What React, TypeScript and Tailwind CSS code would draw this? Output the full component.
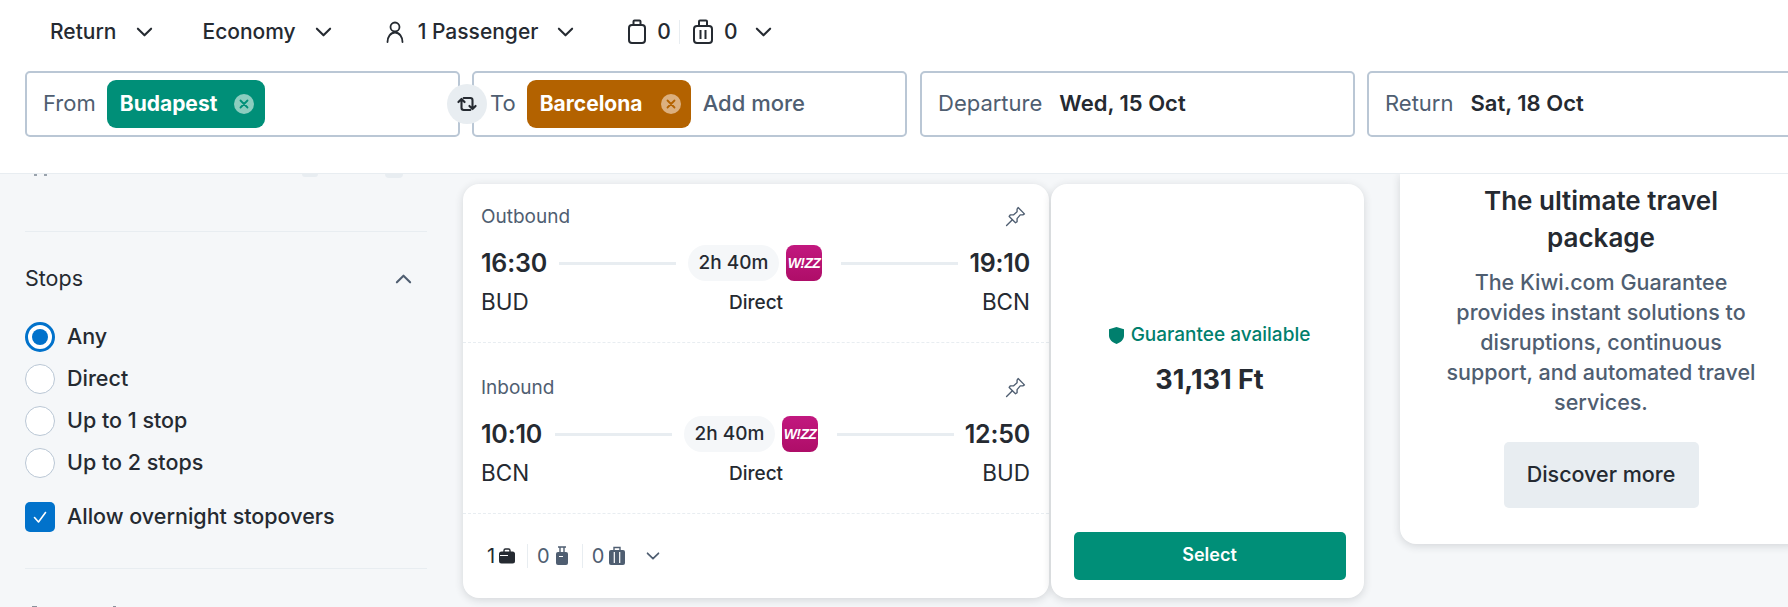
const font = { fontFamily: "Inter, 'Noto Sans', sans-serif" }

const Chevron = ({ className = "", up = false }: { className?: string; up?: boolean }) => (
  <svg viewBox="0 0 18 10" className={className} fill="none" stroke="currentColor" strokeWidth="2.2" strokeLinecap="round" strokeLinejoin="round">
    <path d={up ? "M2 8.5 9 1.5 16 8.5" : "M2 1.5 9 8.5 16 1.5"} />
  </svg>
)

const Pin = ({ className = "" }: { className?: string }) => (
  <svg viewBox="0 0 20 20" className={className} fill="none" stroke="#4f5e71" strokeWidth="1.3" strokeLinejoin="round" strokeLinecap="round">
    <path d="M1.5 18.5 7 13" />
    <path d="M12.5 1.5 18.5 7.500 17 8.500 14.500 8.500 11.500 12 11.500 15 10 16 4 10 5 8.500 8 8.500 11.500 5.500 11.500 3z" />
  </svg>
)

const Wizz = () => (
  <div className="flex h-9 w-9 items-center justify-center rounded-lg bg-gradient-to-b from-[#c2187f] to-[#ae0d68]">
    <span className="text-[14px] font-black italic leading-none tracking-[-0.6px] text-white" style={{ fontFamily: "'Liberation Sans', sans-serif" }}>
      W!ZZ
    </span>
  </div>
)

const XCircle = ({ fill, color }: { fill: string; color: string }) => (
  <svg viewBox="0 0 20 20" className="h-5 w-5 shrink-0">
    <circle cx="10" cy="10" r="10" fill={fill} />
    <path d="M6.500 6.500 13.500 13.500M13.500 6.500 6.500 13.500" stroke={color} strokeWidth="1.800" strokeLinecap="round" />
  </svg>
)

const Field = ({ children, className = "" }: { children: React.ReactNode; className?: string }) => (
  <div className={`flex h-[66px] w-[435px] shrink-0 items-center rounded-[5px] border-2 border-[#bac7d5] bg-white pl-4 text-[22px] ${className}`}>
    {children}
  </div>
)

const Segment = ({ label, from, to, dep, arr, depClass }: { label: string; from: string; to: string; dep: string; arr: string; depClass: string }) => (
  <div className="flex flex-col pl-[18px] pr-[19px]">
    <div className="flex h-[26px] items-center justify-between pr-[4px]">
      <span className="pt-[2px] text-[19px] text-[#4f5e71]">{label}</span>
      <Pin className="h-[21px] w-[21px]" />
    </div>
    <div className="mt-[16px] flex h-9 items-center">
      <span className={`pt-px text-[25px] font-semibold tracking-[-0.2px] text-[#252a31] ${depClass}`}>{dep}</span>
      <div className="ml-[13px] h-[3px] w-[117px] bg-[#e8edf1]" />
      <div className="ml-3 flex h-9 w-[91px] items-center justify-center rounded-full bg-[#f5f7f9] text-[19px] font-medium text-[#252a31]">2h 40m</div>
      <div className="ml-[7px]">
        <Wizz />
      </div>
      <div className="ml-[19px] h-[3px] w-[117px] bg-[#e8edf1]" />
      <span className="ml-auto pt-px text-[25px] font-semibold tracking-[-0.2px] text-[#252a31]">{arr}</span>
    </div>
    <div className="relative mt-[6px] flex h-[30px] items-center justify-between text-[22.5px] text-[#252a31]">
      <span>{from}</span>
      <span className="absolute left-[248px] pt-[2px] text-[19px] font-medium">Direct</span>
      <span>{to}</span>
    </div>
  </div>
)

const cardShadow = "shadow-[0_2px_8px_rgba(37,42,49,0.16)]"

export default function App() {
  return (
    <div className="flex h-[607px] w-[1788px] flex-col overflow-hidden bg-[#f5f7f9]" style={font}>
      <header className="flex h-[174px] shrink-0 flex-col border-b border-[#e8edf1] bg-white">
        <div className="flex h-[71px] items-center pb-[7px] pl-[50px] text-[21px] font-medium text-[#252a31]">
          <span>Return</span>
          <Chevron className="ml-5 h-[10px] w-[17px]" />
          <span className="ml-[49px]">Economy</span>
          <Chevron className="ml-[19px] h-[10px] w-[17px]" />
          <svg viewBox="0 0 18 22" className="ml-[54px] h-[22px] w-[18px]" fill="none" stroke="currentColor" strokeWidth="1.800" strokeLinecap="round">
            <circle cx="9" cy="6" r="4.500" />
            <path d="M1.500 21c0-5 3-9.500 7.500-9.500s7.500 4.500 7.500 9.500" />
          </svg>
          <span className="ml-[14px]">1 Passenger</span>
          <Chevron className="ml-[19px] h-[10px] w-[17px]" />
          <svg viewBox="0 0 18 26" className="ml-[54px] h-[26px] w-[18px]" fill="none" stroke="currentColor" strokeWidth="2" strokeLinejoin="round">
            <rect x="1" y="6" width="16" height="18" rx="3" />
            <path d="M5.500 6V2.500a1 1 0 0 1 1-1h5a1 1 0 0 1 1 1V6M5 24v1M13 24v1" />
          </svg>
          <span className="ml-[11px]">0</span>
          <div className="ml-2 h-6 w-px bg-[#e8edf1]" />
          <svg viewBox="0 0 20 26" className="ml-[13px] h-[26px] w-5" fill="none" stroke="currentColor" strokeWidth="2" strokeLinejoin="round">
            <rect x="1" y="7" width="18" height="17" rx="3" />
            <path d="M6 7V2.500a1 1 0 0 1 1-1h6a1 1 0 0 1 1 1V7M7.500 11v9M12.500 11v9M5 24v1M15 24v1" />
          </svg>
          <span className="ml-[11px]">0</span>
          <Chevron className="ml-[18px] h-[10px] w-[17px]" />
        </div>
        <div className="flex gap-3 pl-[25px]">
          <Field>
            <span className="pb-[2px] text-[#4f5e71]">From</span>
            <div className="ml-[11px] flex h-12 w-[158px] items-center rounded-[9px] bg-[#008f78] pl-[13px] pr-[11px] text-[21px] font-bold text-white">
              <span>Budapest</span>
              <span className="ml-auto"><XCircle fill="#8ccdbf" color="#008f78" /></span>
            </div>
          </Field>
          <div className="relative">
            <div className="absolute left-[-25px] top-[13px] flex h-10 w-10 items-center justify-center rounded-full bg-[#e8edf1]">
              <svg viewBox="0 0 20 20" className="h-[22px] w-[22px]" fill="none" stroke="#252a31" strokeWidth="1.900" strokeLinecap="round" strokeLinejoin="round">
                <path d="M7 4.500h6a2 2 0 0 1 2 2v8M12.200 11.800 15 14.600l2.800-2.800" />
                <path d="M13 15.500H7a2 2 0 0 1-2-2v-8M2.200 8.200 5 5.400l2.800 2.800" />
              </svg>
            </div>
            <Field>
              <span className="pb-[2px] text-[#4f5e71]">To</span>
              <div className="ml-[11px] flex h-12 w-[164px] items-center rounded-[9px] bg-[#b36200] pl-[13px] pr-[10px] text-[21px] font-bold text-white">
                <span>Barcelona</span>
                <span className="ml-auto"><XCircle fill="#dcb07f" color="#b36200" /></span>
              </div>
              <span className="ml-3 pb-[2px] font-medium text-[#4f5e71]">Add more</span>
            </Field>
          </div>
          <Field className="ml-px">
            <span className="pb-[2px] text-[#4f5e71]">Departure</span>
            <span className="ml-[17px] pb-[2px] font-semibold text-[#252a31]">Wed, 15 Oct</span>
          </Field>
          <Field>
            <span className="pb-[2px] text-[#4f5e71]">Return</span>
            <span className="ml-[17px] pb-[2px] font-semibold text-[#252a31]">Sat, 18 Oct</span>
          </Field>
        </div>
      </header>

      <div className="flex min-h-0 flex-1 overflow-hidden">
        <aside className="ml-[25px] w-[402px] shrink-0 text-[21.5px] text-[#252a31]">
          {/* bits of the filter row scrolled under the header */}
          <div className="flex h-[4px] items-start">
            <span className="ml-[9px] h-[2px] w-[3px] bg-[#9aa3ad]" />
            <span className="ml-[7px] h-[2px] w-[3px] bg-[#9aa3ad]" />
            <span className="ml-[255px] h-[3px] w-[16px] rounded-b-full bg-[#e8edf1]" />
            <span className="ml-[67px] h-[4px] w-[18px] rounded-b-full bg-[#e8edf1]" />
          </div>
          <div className="mt-[53px] border-t border-[#e8edf1]" />
          <div className="mt-[33px] flex h-7 items-center justify-between pr-[15px]">
            <span className="pb-[2px]">Stops</span>
            <Chevron up className="h-[10px] w-[17px] text-[#4f5e71]" />
          </div>
          <div className="mt-[29px] flex flex-col gap-3">
            {["Any", "Direct", "Up to 1 stop", "Up to 2 stops"].map((label, i) => (
              <div key={label} className="flex h-[30px] items-center gap-3 font-medium">
                {i === 0 ? (
                  <div className="flex h-[30px] w-[30px] items-center justify-center rounded-full border-[3px] border-[#0172cb] bg-white">
                    <div className="h-4 w-4 rounded-full bg-[#0172cb]" />
                  </div>
                ) : (
                  <div className="h-[30px] w-[30px] rounded-full border border-[#bac7d5] bg-white" />
                )}
                <span className="pb-[2px]">{label}</span>
              </div>
            ))}
          </div>
          <div className="mt-[24px] flex h-[30px] items-center gap-3 font-medium">
            <div className="flex h-[30px] w-[30px] items-center justify-center rounded-[5px] bg-[#0172cb]">
              <svg viewBox="0 0 16 16" className="h-4 w-4" fill="none" stroke="white" strokeWidth="1.600" strokeLinecap="round" strokeLinejoin="round">
                <path d="M2.500 8.500 6.500 13 13.500 3.500" />
              </svg>
            </div>
            <span className="pb-[2px]">Allow overnight stopovers</span>
          </div>
          <div className="mt-[36px] border-t border-[#e8edf1]" />
          <div className="mt-[37px] flex h-1">
            <span className="ml-[7px] h-1 w-[5px] bg-[#8a929c]" />
            <span className="ml-[76px] h-1 w-[3px] bg-[#8a929c]" />
          </div>
        </aside>

        <main className="ml-[36px] mt-[10px] flex h-[414px] shrink-0 gap-[1.5px] text-[#252a31]">
          <div className={`flex w-[586px] flex-col rounded-2xl bg-white ${cardShadow}`}>
            <div className="pt-[19px]">
              <Segment label="Outbound" from="BUD" to="BCN" dep="16:30" arr="19:10" depClass="w-[65px]" />
            </div>
            <div className="mt-[25px] border-t border-dashed border-[#e8edf1] pt-[31px]">
              <Segment label="Inbound" from="BCN" to="BUD" dep="10:10" arr="12:50" depClass="w-[61px]" />
            </div>
            <div className="mt-[25px] flex flex-1 items-center border-t border-dashed border-[#e8edf1] pl-6 text-[20px]">
              <span className="w-2">1</span>
              <svg viewBox="0 0 16 16" className="ml-1 h-4 w-4">
                <path d="M5 4V2.500A1.500 1.500 0 0 1 6.500 1h3A1.500 1.500 0 0 1 11 2.500V4" fill="none" stroke="#252a31" strokeWidth="1.400" />
                <rect y="3.500" width="16" height="12" rx="2.500" fill="#252a31" />
                <path d="M1 7.500h8" stroke="white" strokeWidth="1" />
              </svg>
              <div className="ml-3 h-6 w-px bg-[#e8edf1]" />
              <span className="ml-[9px] text-[#4f5e71]">0</span>
              <svg viewBox="0 0 12 20" className="ml-[6px] h-5 w-3">
                <path d="M2 1h8M4 1v5M8 1v5" fill="none" stroke="#4f5e71" strokeWidth="1.400" />
                <rect y="6" width="12" height="13" rx="2" fill="#4f5e71" />
                <path d="M3 10.500h4" stroke="white" strokeWidth="1" />
              </svg>
              <div className="ml-[14px] h-6 w-px bg-[#e8edf1]" />
              <span className="ml-[9px] text-[#4f5e71]">0</span>
              <svg viewBox="0 0 16 20" className="ml-[5px] h-5 w-4">
                <path d="M5 4V1.500h6V4" fill="none" stroke="#4f5e71" strokeWidth="1.400" />
                <rect y="4" width="16" height="15" rx="2" fill="#4f5e71" />
                <path d="M5.300 6v11M10.700 6v11" stroke="white" strokeWidth="1.200" />
              </svg>
              <Chevron className="ml-[21px] h-2 w-[14px] text-[#4f5e71]" />
            </div>
          </div>
          <div className={`flex w-[313px] flex-col items-center rounded-2xl bg-white pl-[5px] ${cardShadow}`}>
            <div className="mt-[137px] flex items-center gap-[7px] text-[19px] font-medium leading-[28px] text-[#007f6d]">
              <svg viewBox="0 0 15 17" className="h-[17px] w-[15px]" fill="#007f6d">
                <path d="M7.500 0 15 2.300V8.500c0 4-3.200 7-7.500 8.500C3.200 15.500 0 12.500 0 8.500V2.300z" />
              </svg>
              <span>Guarantee available</span>
            </div>
            <div className="mt-[13px] text-[27px] font-bold leading-[36px]">31,131 Ft</div>
            <button className="mb-[18px] mt-auto h-12 w-[272px] rounded-[5px] bg-[#008f78] pb-[3px] text-[18px] font-semibold text-white">Select</button>
          </div>
        </main>

        <section className={`ml-[36px] flex h-[370px] w-[403px] shrink-0 flex-col items-center rounded-b-2xl bg-white text-center ${cardShadow}`}>
          <h2 className="mt-[8px] w-[280px] text-[26px] font-semibold leading-[37px] text-[#252a31]">The ultimate travel package</h2>
          <p className="mt-[11px] text-[21.5px] font-medium leading-[30px] text-[#4f5e71]">
            The Kiwi.com Guarantee
            <br />
            provides instant solutions to
            <br />
            disruptions, continuous
            <br />
            support, and automated travel
            <br />
            services.
          </p>
          <button className="mt-[25px] h-[66px] w-[195px] rounded-[5px] bg-[#e8edf1] pb-[2px] text-[21.5px] font-medium text-[#252a31]">Discover more</button>
        </section>
      </div>
    </div>
  )
}
